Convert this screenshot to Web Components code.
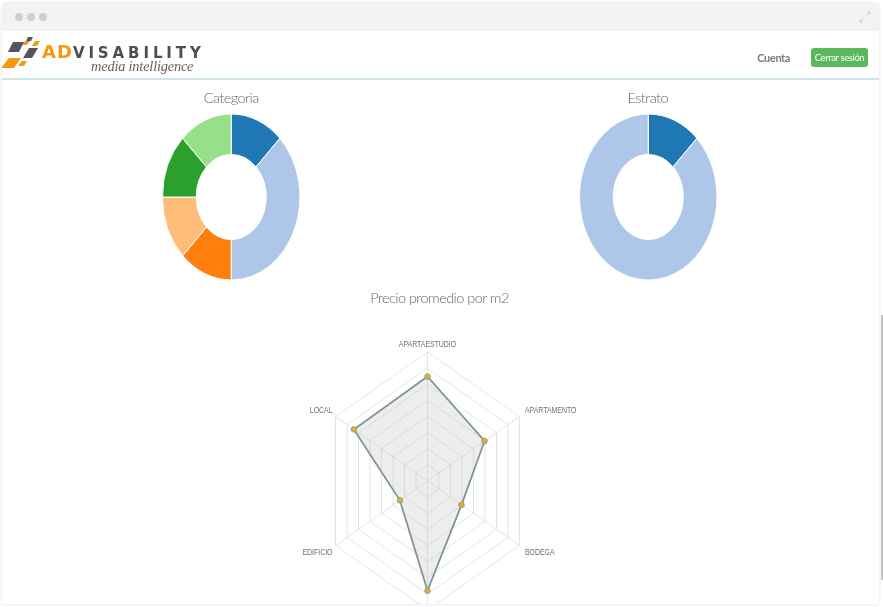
<!DOCTYPE html>
<html lang="es">
<head>
<meta charset="utf-8">
<title>Advisability</title>
<style>
    html, body { margin: 0; height: 100%; background: #fff; overflow: hidden; }
    body { font-family: "Lato", "Liberation Sans", sans-serif; }
</style>
</head>
<body>
<browser-frame>
    <app-navbar></app-navbar>
    <chart-board>
        <donut-chart slot="left" title-text="Categoria" values="1,3,1,1,1,1"></donut-chart>
        <donut-chart slot="right" title-text="Estrato" values="1,7"></donut-chart>
        <radar-chart slot="bottom" title-text="Precio promedio por m2"></radar-chart>
    </chart-board>
</browser-frame>

<script>
document.addEventListener('DOMContentLoaded', () => {
    const palette = ['#1f77b4', '#aec7e8', '#ff7f0e', '#ffbb78', '#2ca02c', '#98df8a'];

    // 브라우저 창 모양 mockup frame
    class BrowserFrame extends HTMLElement {
        constructor() {
            super();
            this.attachShadow({ mode: 'open' });
            this.shadowRoot.innerHTML = `
                <style>
                    :host {
                        display: block;
                        position: relative;
                        height: 607px;
                        padding: 3px 4px 3px 2px;
                        box-sizing: border-box;
                        filter: blur(0.45px);
                    }
                    .window {
                        height: 100%;
                        display: flex;
                        flex-direction: column;
                        background: #fff;
                        border-radius: 5px 5px 0 0;
                        box-shadow: 0 0 3px rgba(0, 0, 0, 0.16);
                        overflow: hidden;
                    }
                    .bar {
                        flex: none;
                        height: 28px;
                        display: flex;
                        align-items: center;
                        justify-content: space-between;
                        padding: 0 8px 0 13px;
                        background: #f3f3f3;
                    }
                    .dots { display: flex; gap: 4px; }
                    .dots i { width: 8px; height: 8px; border-radius: 50%; background: #cfcfcf; }
                    .content { flex: 1; min-height: 0; overflow: hidden; }
                    svg { display: block; }
                    .scrollbar {
                        position: absolute;
                        right: 0;
                        top: 315px;
                        width: 2px;
                        height: 265px;
                        background: #c4c4c4;
                    }
                </style>
                <div class="window">
                    <div class="bar">
                        <div class="dots"><i></i><i></i><i></i></div>
                        <svg width="12" height="12" viewBox="0 0 12 12" fill="none" stroke="#d0d0d0" stroke-width="1">
                            <path d="M1 11 L4.5 7.5 M1 8 V11 H4 M11 1 L7.5 4.5 M8 1 H11 V4"/>
                        </svg>
                    </div>
                    <div class="content"><slot></slot></div>
                </div>
                <div class="scrollbar"></div>
            `;
        }
    }
    customElements.define('browser-frame', BrowserFrame);

    class BrandLogo extends HTMLElement {
        constructor() {
            super();
            this.attachShadow({ mode: 'open' });
            this.shadowRoot.innerHTML = `
                <style>
                    :host { display: flex; align-items: flex-start; }
                    svg { display: block; flex: none; margin-top: 6px; overflow: visible; }
                    .words { margin: 12px 0 0 0; }
                    .name {
                        height: 16px;
                        font: bold 15px/18px "DejaVu Sans", sans-serif;
                        letter-spacing: 3.9px;
                        color: #4d4d57;
                        white-space: nowrap;
                    }
                    .name b { color: #f39a12; font-size: 18px; letter-spacing: 1px; }
                    .tag {
                        margin: 0 0 0 49px;
                        font: italic 14.4px/14px "Liberation Serif", serif;
                        letter-spacing: -0.2px;
                        color: #6b625a;
                        white-space: nowrap;
                    }
                </style>
                <svg width="40" height="32" viewBox="2 37 40 32">
                    <polygon fill="#f39a12" points="1,68 9,58 21,58 14,68"/>
                    <polygon fill="#f39a12" points="18,66 22,61 27,61 24,66"/>
                    <polygon fill="#f39a12" points="22,45 25,41 30,41 27,45"/>
                    <polygon fill="#f39a12" points="32,46 35,41 40,41 37,46"/>
                    <polygon fill="#55555f" points="8,52 13,42 24,42 19,52"/>
                    <polygon fill="#55555f" points="23,58 29,48 38,48 32,58"/>
                    <polygon fill="#55555f" points="26,41 28,37 33,37 31,41"/>
                </svg>
                <div class="words">
                    <div class="name"><b>AD</b>VISABILITY</div>
                    <div class="tag">media intelligence</div>
                </div>
            `;
        }
    }
    customElements.define('brand-logo', BrandLogo);

    class AppNavbar extends HTMLElement {
        constructor() {
            super();
            this.attachShadow({ mode: 'open' });
            this.shadowRoot.innerHTML = `
                <style>
                    :host {
                        display: flex;
                        align-items: flex-start;
                        justify-content: space-between;
                        height: 49px;
                        box-sizing: border-box;
                        border-bottom: 2px solid #cfe5e5;
                    }
                    .links {
                        display: flex;
                        align-items: center;
                        gap: 21px;
                        margin: 17px 11px 0 0;
                    }
                    .account { font: bold 11px "Lato", sans-serif; letter-spacing: -0.4px; color: #7a7a7a; }
                    button {
                        width: 57px;
                        height: 19px;
                        padding: 0;
                        border: 0;
                        border-radius: 3px;
                        background: #5cb85c;
                        color: #fff;
                        font: 9.5px "Lato", sans-serif;
                        letter-spacing: -0.4px;
                    }
                </style>
                <brand-logo></brand-logo>
                <div class="links">
                    <span class="account">Cuenta</span>
                    <button>Cerrar sesión</button>
                </div>
            `;
        }
    }
    customElements.define('app-navbar', AppNavbar);

    class ChartBoard extends HTMLElement {
        constructor() {
            super();
            this.attachShadow({ mode: 'open' });
            this.shadowRoot.innerHTML = `
                <style>
                    :host {
                        display: grid;
                        grid-template-columns: 1fr 1fr;
                        padding: 9px 23px 0 21px;
                        row-gap: 9px;
                    }
                    .wide { grid-column: 1 / 3; }
                </style>
                <slot name="left"></slot>
                <slot name="right"></slot>
                <div class="wide"><slot name="bottom"></slot></div>
            `;
        }
    }
    customElements.define('chart-board', ChartBoard);

    // 도넛 차트: 타원형 (원본이 세로로 늘어나 있음)
    class DonutChart extends HTMLElement {
        constructor() {
            super();
            this.attachShadow({ mode: 'open' });
        }

        connectedCallback() {
            const values = this.getAttribute('values').split(',').map(Number);
            const total = values.reduce((a, b) => a + b, 0);
            const cx = 69.25, cy = 83, rx = 68.75, ry = 83, ix = 35, iy = 42.5;
            let angle = 0;
            const paths = values.map((value, i) => {
                const next = angle + value / total * Math.PI * 2;
                const large = next - angle > Math.PI ? 1 : 0;
                const pt = (a, x, y) => `${(cx + Math.sin(a) * x).toFixed(2)} ${(cy - Math.cos(a) * y).toFixed(2)}`;
                const d = `M${pt(angle, rx, ry)} A${rx} ${ry} 0 ${large} 1 ${pt(next, rx, ry)} ` +
                    `L${pt(next, ix, iy)} A${ix} ${iy} 0 ${large} 0 ${pt(angle, ix, iy)} Z`;
                angle = next;
                return `<path d="${d}" fill="${palette[i]}" stroke="#fff" stroke-width="1"/>`;
            }).join('');
            this.shadowRoot.innerHTML = `
                <style>
                    :host { display: flex; flex-direction: column; align-items: center; }
                    h2 {
                        margin: 0 0 7px;
                        font: 300 14.5px/18px "Lato", sans-serif;
                        letter-spacing: -0.55px;
                        color: #666;
                    }
                    svg { display: block; overflow: visible; }
                </style>
                <h2>${this.getAttribute('title-text')}</h2>
                <svg width="138" height="166" viewBox="0 0 138 166">${paths}</svg>
            `;
        }
    }
    customElements.define('donut-chart', DonutChart);

    class RadarChart extends HTMLElement {
        constructor() {
            super();
            this.attachShadow({ mode: 'open' });
        }

        connectedCallback() {
            const cx = 137.5, cy = 151, rx = 106.2, ry = 129, levels = 8;
            const axes = [
                { label: 'APARTAESTUDIO', x: 137.5, y: 17, anchor: 'middle', value: 0.81 },
                { label: 'APARTAMENTO', x: 235, y: 83, anchor: 'start', value: 0.62 },
                { label: 'BODEGA', x: 235, y: 225, anchor: 'start', value: 0.37 },
                { label: 'EDIFICIO', x: 42.5, y: 225, anchor: 'end', value: 0.30 },
                { label: 'LOCAL', x: 42.5, y: 83, anchor: 'end', value: 0.80 }
            ];
            // 6 axes: the bottom one has no visible label (cut off by the window)
            axes.splice(3, 0, { label: '', value: 0.85 });

            const point = (i, r) => {
                const a = i / 6 * Math.PI * 2;
                return [cx + Math.sin(a) * rx * r, cy - Math.cos(a) * ry * r];
            };
            const ring = r => axes.map((_, i) => point(i, r).map(n => n.toFixed(2)).join(',')).join(' ');

            let grid = '';
            for (let l = 1; l <= levels; l++) {
                grid += `<polygon points="${ring(l / levels)}" fill="none" stroke="#e4e4e4" stroke-width="1"/>`;
            }
            axes.forEach((_, i) => {
                const [x, y] = point(i, 1);
                grid += `<line x1="${cx}" y1="${cy}" x2="${x}" y2="${y}" stroke="#e4e4e4" stroke-width="1"/>`;
            });

            const shape = axes.map((axis, i) => point(i, axis.value).map(n => n.toFixed(2)).join(',')).join(' ');
            const dots = axes.map((axis, i) => {
                const [x, y] = point(i, axis.value);
                return `<circle cx="${x}" cy="${y}" r="2.8" fill="#e2b41a" stroke="#7f949c" stroke-width="0.8"/>`;
            }).join('');
            // 원본 라벨이 가로로 눌려 있어서 scale 사용
            const labels = axes.filter(axis => axis.label).map(axis =>
                `<text transform="translate(${axis.x} ${axis.y}) scale(0.825 1)" text-anchor="${axis.anchor}">${axis.label}</text>`
            ).join('');

            this.shadowRoot.innerHTML = `
                <style>
                    :host { display: flex; flex-direction: column; align-items: center; }
                    h2 {
                        margin: 0 0 23px;
                        font: 300 14.5px/18px "Lato", sans-serif;
                        letter-spacing: -0.55px;
                        color: #666;
                    }
                    svg { display: block; overflow: visible; }
                    text { font: 8.4px "Liberation Sans", sans-serif; fill: #6e6e6e; }
                </style>
                <h2>${this.getAttribute('title-text')}</h2>
                <svg width="300" height="290" viewBox="0 0 300 290">
                    ${grid}
                    <polygon points="${shape}" fill="#c4c4c4" fill-opacity="0.3" stroke="#7f949c" stroke-width="1.8"/>
                    ${dots}
                    ${labels}
                </svg>
            `;
        }
    }
    customElements.define('radar-chart', RadarChart);
});
</script>
</body>
</html>
